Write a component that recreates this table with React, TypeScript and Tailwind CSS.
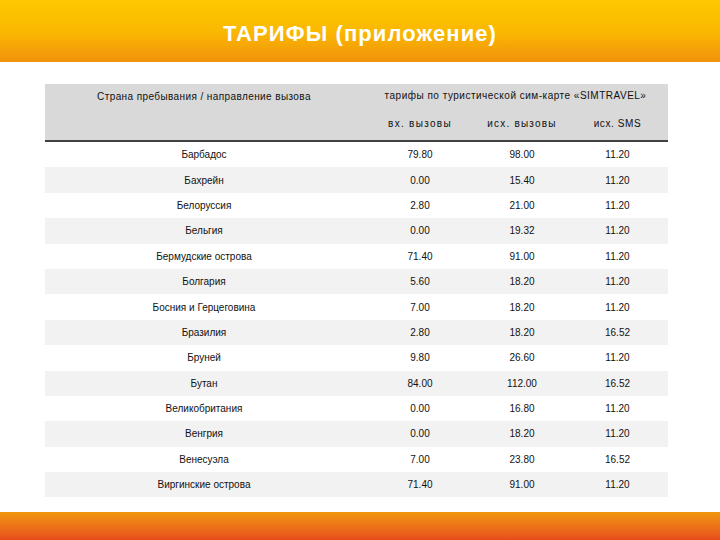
const rows: [string, string, string, string][] = [
  ["Барбадос", "79.80", "98.00", "11.20"],
  ["Бахрейн", "0.00", "15.40", "11.20"],
  ["Белоруссия", "2.80", "21.00", "11.20"],
  ["Бельгия", "0.00", "19.32", "11.20"],
  ["Бермудские острова", "71.40", "91.00", "11.20"],
  ["Болгария", "5.60", "18.20", "11.20"],
  ["Босния и Герцеговина", "7.00", "18.20", "11.20"],
  ["Бразилия", "2.80", "18.20", "16.52"],
  ["Бруней", "9.80", "26.60", "11.20"],
  ["Бутан", "84.00", "112.00", "16.52"],
  ["Великобритания", "0.00", "16.80", "11.20"],
  ["Венгрия", "0.00", "18.20", "11.20"],
  ["Венесуэла", "7.00", "23.80", "16.52"],
  ["Виргинские острова", "71.40", "91.00", "11.20"],
];

const cols = "grid grid-cols-[318px_114px_90px_101px]";

export default function App() {
  return (
    <div className="flex h-[540px] w-[720px] flex-col bg-white font-['Liberation_Sans',Arial,sans-serif] text-[10px] text-[#111]">
      {/* top bar */}
      <div className="flex h-[62px] items-center justify-center bg-gradient-to-b from-[#fec800] via-[#fbb800] to-[#f0930c] pt-[4px]">
        <h1 className="text-[22px] font-bold tracking-[1.1px] text-white">ТАРИФЫ (приложение)</h1>
      </div>

      {/* table */}
      <div className="mx-[45px] mt-[22px] w-[623px]">
        <div className={`${cols} border-b-2 border-[#404040] bg-[#d9d9d9]`}>
          <div className="row-span-2 pt-[5px] text-center tracking-[0.4px]">Страна пребывания / направление вызова</div>
          <div className="col-span-3 flex h-[22px] items-center justify-center tracking-[0.5px]">
            тарифы по туристической сим-карте «SIMTRAVEL»
          </div>
          <div className="flex h-[34px] items-center justify-center tracking-[1.3px]">вх. вызовы</div>
          <div className="flex h-[34px] items-center justify-center tracking-[1.2px]">исх. вызовы</div>
          <div className="flex h-[34px] items-center justify-center tracking-[0.6px]">исх. SMS</div>
        </div>

        {rows.map((r, i) => (
          <div key={r[0]} className={`${cols} h-[25.4px] items-center text-center ${i % 2 ? "bg-[#f2f2f2]" : "bg-white"}`}>
            <div>{r[0]}</div>
            <div>{r[1]}</div>
            <div>{r[2]}</div>
            <div>{r[3]}</div>
          </div>
        ))}
      </div>

      {/* bottom bar */}
      <div className="mt-auto h-[28px] bg-gradient-to-b from-[#f0960c] to-[#e84c1c]" />
    </div>
  );
}
